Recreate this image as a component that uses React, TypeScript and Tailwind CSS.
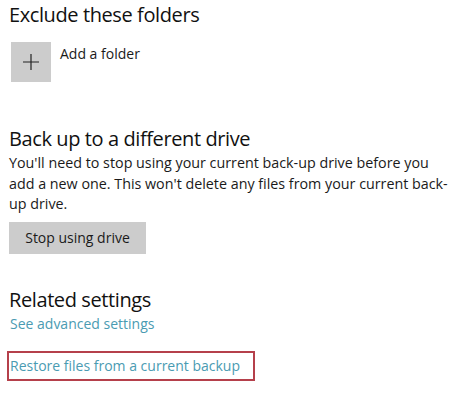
import React from 'react';

export default function App() {
    return (
        <div className="w-[468px] h-[398px] bg-white text-[#1a1a1a] px-[9px] pt-[1px]" style={{ fontFamily: '"Open Sans", "Noto Sans", sans-serif' }}>
            {/* Exclude */}
            <h2 className="text-[20px] leading-[28px] tracking-[-0.4px] text-[#111]">Exclude these folders</h2>
            <button className="mt-[13px] flex items-start gap-[9px] ml-[2px]">
                <span className="w-[40px] h-[40px] bg-[#cccccc] flex items-center justify-center">
                    <svg width="16" height="16" viewBox="0 0 16 16" stroke="#222" strokeWidth="1.2">
                        <path d="M8 0v16M0 8h16" />
                    </svg>
                </span>
                <span className="text-[14px] leading-[20px] mt-[2px]">Add a folder</span>
            </button>

            {/* Back up */}
            <h2 className="mt-[43px] text-[20px] leading-[28px] tracking-[-0.4px] text-[#111]">Back up to a different drive</h2>
            <p className="text-[14.3px] leading-[20.5px] whitespace-nowrap">
                You'll need to stop using your current back-up drive before you<br />
                add a new one. This won't delete any files from your current back-<br />
                up drive.
            </p>
            <button className="mt-[7px] w-[137px] h-[32px] bg-[#cccccc] text-[14px]">Stop using drive</button>

            {/* Related */}
            <h2 className="mt-[32px] text-[20px] leading-[28px] tracking-[-0.4px] text-[#111]">Related settings</h2>
            <a className="block ml-[1px] text-[14px] leading-[20px] text-[#4a9bb2]">See advanced settings</a>
            <div className="mt-[17px] -ml-[2px] w-[248px] h-[30px] border-2 border-[#b5404b] flex items-center pl-[1px]">
                <a className="text-[14px] leading-[20px] text-[#4a9bb2]">Restore files from a current backup</a>
            </div>
        </div>
    );
}
